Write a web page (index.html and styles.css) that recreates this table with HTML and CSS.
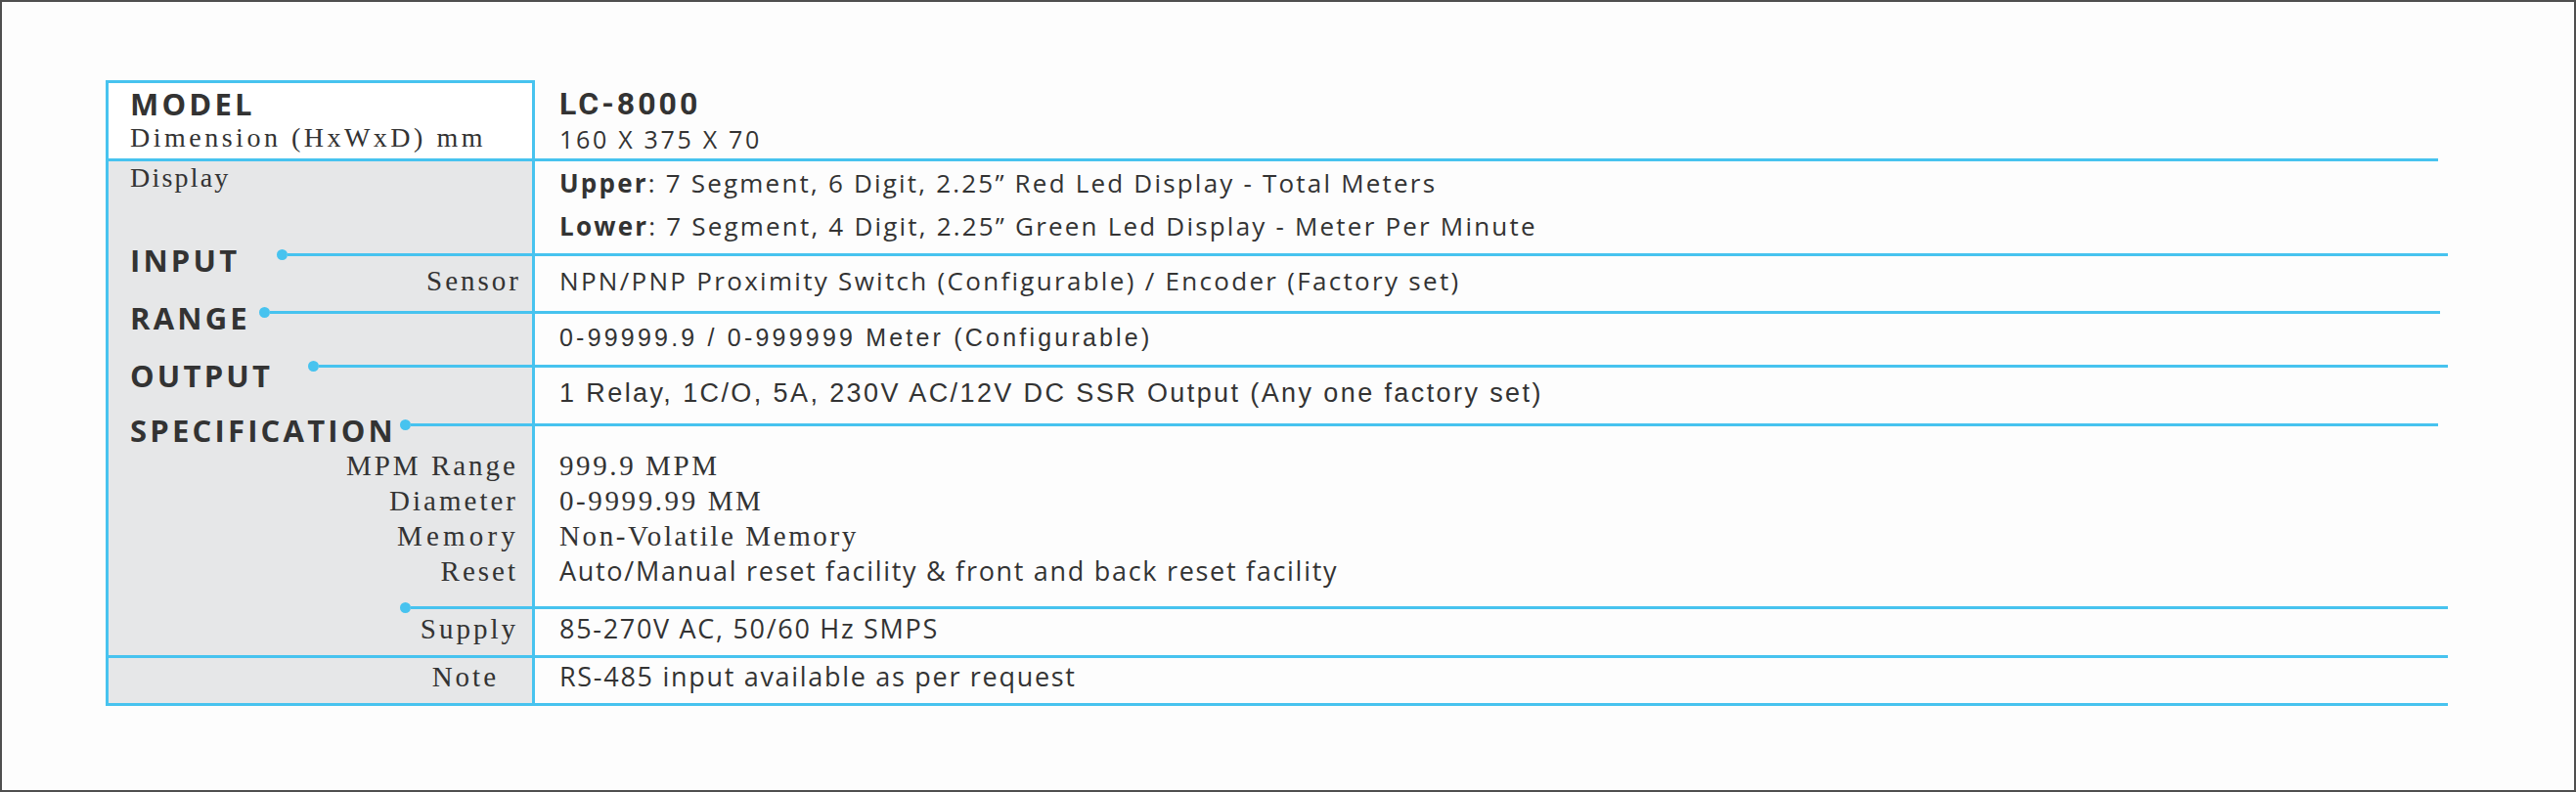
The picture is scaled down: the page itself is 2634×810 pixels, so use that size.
FILE: index.html
```html
<!DOCTYPE html>
<html lang="en">
<head>
<meta charset="utf-8">
<title>LC-8000 Specification</title>
<link rel="stylesheet" href="styles.css">
</head>
<body>
<div class="sheet">
  <div class="spec">
    <!-- Row A: model -->
    <div class="lc lc-top">
      <div class="hd">MODEL</div>
      <div class="lbl dim">Dimension (HxWxD) mm</div>
    </div>
    <div class="rc rc-a">
      <div class="hd model-no">LC-8000</div>
      <div class="val-dims">160 X 375 X 70</div>
    </div>

    <!-- Row B: display -->
    <div class="lc lc-line">
      <div class="lbl disp">Display</div>
    </div>
    <div class="rc line short rc-b">
      <div class="os-sm tall"><b>Upper</b>: 7 Segment, 6 Digit, 2.25” Red Led Display - Total Meters</div>
      <div class="os-sm tall"><b>Lower</b>: 7 Segment, 4 Digit, 2.25” Green Led Display - Meter Per Minute</div>
    </div>

    <!-- Row C: input -->
    <div class="lc">
      <div class="lhead"><span class="ttl w-input">INPUT</span><span class="lead"></span></div>
      <div class="lbl r sensor">Sensor</div>
    </div>
    <div class="rc line rc-c">
      <div class="os-sm">NPN/PNP Proximity Switch (Configurable) / Encoder (Factory set)</div>
    </div>

    <!-- Row D: range -->
    <div class="lc">
      <div class="lhead"><span class="ttl w-range">RANGE</span><span class="lead"></span></div>
    </div>
    <div class="rc line mid rc-d">
      <div class="ar ar-range">0-99999.9 / 0-999999 Meter (Configurable)</div>
    </div>

    <!-- Row E: output -->
    <div class="lc">
      <div class="lhead"><span class="ttl low w-output">OUTPUT</span><span class="lead"></span></div>
    </div>
    <div class="rc line rc-e">
      <div class="ar ar-out">1 Relay, 1C/O, 5A, 230V AC/12V DC SSR Output (Any one factory set)</div>
    </div>

    <!-- Row F: specification -->
    <div class="lc">
      <div class="lhead"><span class="ttl w-spec">SPECIFICATION</span><span class="lead"></span></div>
      <div class="subs">
        <div class="sl">MPM Range</div>
        <div class="sl">Diameter</div>
        <div class="sl mem">Memory</div>
        <div class="sl">Reset</div>
      </div>
    </div>
    <div class="rc line short rc-f">
      <div class="sv">999.9 MPM</div>
      <div class="sv">0-9999.99 MM</div>
      <div class="sv">Non-Volatile Memory</div>
      <div class="os-lg">Auto/Manual reset facility &amp; front and back reset facility</div>
    </div>

    <!-- Row G: supply -->
    <div class="lc">
      <div class="lhead"><span class="ttl w-spec"></span><span class="lead"></span></div>
      <div class="lbl r supply">Supply</div>
    </div>
    <div class="rc line rc-g">
      <div class="os-lg">85-270V AC, 50/60 Hz SMPS</div>
    </div>

    <!-- Row H: note -->
    <div class="lc lc-line lc-last">
      <div class="lbl r note">Note</div>
    </div>
    <div class="rc line last rc-h">
      <div class="os-lg">RS-485 input available as per request</div>
    </div>
  </div>
</div>
</body>
</html>
```

FILE: styles.css
```css
:root {
  --blue: #47c3ef;
  --ink: #333333;
  --gray: #e6e7e8;
}

* { box-sizing: border-box; }

html, body {
  margin: 0;
  padding: 0;
  background: #fdfdfd;
}

.sheet {
  width: 2634px;
  height: 810px;
  border: 2px solid #4f4f4f;
  padding: 80px 0 0 106px;
  background: #fdfdfd;
  color: var(--ink);
}

.spec {
  display: grid;
  grid-template-columns: 439px 1956px;
  grid-template-rows: 80px 97px 59px 55px 60px 187px 50px 52px;
}

/* left column cells */
.lc {
  background: var(--gray);
  border-left: 3px solid var(--blue);
  border-right: 3px solid var(--blue);
  padding-left: 22px;
}
.lc-top {
  background: #fff;
  border-top: 3px solid var(--blue);
  padding-top: 6px;
}
.lc-line { border-top: 3px solid var(--blue); }
.lc-last { border-bottom: 3px solid var(--blue); }

/* right column cells */
.rc { padding-left: 25px; }
.rc.line { border-top: 3px solid var(--blue); }
.rc.last { border-bottom: 3px solid var(--blue); }
.rc.short { margin-right: 10px; }
.rc.mid { margin-right: 8px; }

.rc-a { padding-top: 9px; }
.rc-b { padding-top: 0; }
.rc-c { padding-top: 9px; }
.rc-d { padding-top: 8px; }
.rc-e { padding-top: 10px; }
.rc-f { padding-top: 22px; }
.rc-g { padding-top: 4px; }
.rc-h { padding-top: 3px; }

/* bold headings */
.hd, .ttl {
  font-family: "Open Sans", "DejaVu Sans", sans-serif;
  font-weight: 700;
  font-size: 31px;
  line-height: 31px;
  letter-spacing: 3.2px;
  white-space: nowrap;
}
.hd.model-no {
  font-family: Roboto, "Open Sans", sans-serif;
  font-size: 32px;
  line-height: 31px;
  letter-spacing: 3px;
}

/* leader lines with dots */
.lhead {
  display: flex;
  align-items: flex-start;
  height: 0;
}
.ttl {
  flex: none;
  margin-top: -8px;
}
.ttl.low { margin-top: -4px; }
.w-input { width: 149.5px; }
.w-range { width: 131.5px; }
.w-output { width: 181.5px; }
.w-spec { width: 275.5px; }

.lead {
  flex: 1;
  display: flex;
  align-items: center;
  height: 11px;
  margin-top: -4px;
}
.lead::before {
  content: "";
  flex: none;
  width: 11px;
  height: 11px;
  border-radius: 50%;
  background: var(--blue);
}
.lead::after {
  content: "";
  flex: 1;
  height: 3px;
  background: var(--blue);
}

/* serif labels */
.lbl, .sl, .sv {
  font-family: "Liberation Serif", "Times New Roman", serif;
  font-size: 29px;
  line-height: 30px;
  letter-spacing: 3px;
  white-space: nowrap;
}
.lbl.dim {
  font-size: 28px;
  letter-spacing: 3.5px;
  margin-top: 4px;
}
.lbl.disp {
  font-size: 28px;
  letter-spacing: 2.2px;
  padding-top: 2px;
}
.lbl.r { text-align: right; padding-right: 14px; }
.lbl.sensor { margin-top: 13px; padding-right: 11px; }
.lbl.supply { margin-top: 8px; }
.lbl.note { padding-top: 4px; padding-right: 34px; }

.subs { padding-top: 25px; }
.sl {
  line-height: 36px;
  text-align: right;
  padding-right: 14px;
}
.sl.mem { letter-spacing: 4.2px; padding-right: 13px; }
.sv {
  line-height: 36px;
  letter-spacing: 2.6px;
}

/* sans values */
.val-dims {
  font-family: "Open Sans", sans-serif;
  font-size: 25px;
  line-height: 30px;
  letter-spacing: 2.7px;
  margin-top: 5px;
  white-space: nowrap;
}
.os-sm {
  font-family: "Open Sans", sans-serif;
  font-size: 26px;
  line-height: 32px;
  letter-spacing: 2.2px;
  white-space: nowrap;
}
.os-sm.tall { line-height: 44px; }
.os-sm b { font-weight: 700; }
.rc-c .os-sm { letter-spacing: 2.3px; }

.os-lg {
  font-family: "Open Sans", sans-serif;
  font-size: 27px;
  line-height: 36px;
  letter-spacing: 1.7px;
  white-space: nowrap;
}
.rc-g .os-lg, .rc-h .os-lg { line-height: 32px; }

.ar {
  font-family: "Liberation Sans", Arial, sans-serif;
  line-height: 32px;
  white-space: nowrap;
}
.ar-range { font-size: 25px; letter-spacing: 3.2px; }
.ar-out { font-size: 27px; letter-spacing: 2.4px; }
```
